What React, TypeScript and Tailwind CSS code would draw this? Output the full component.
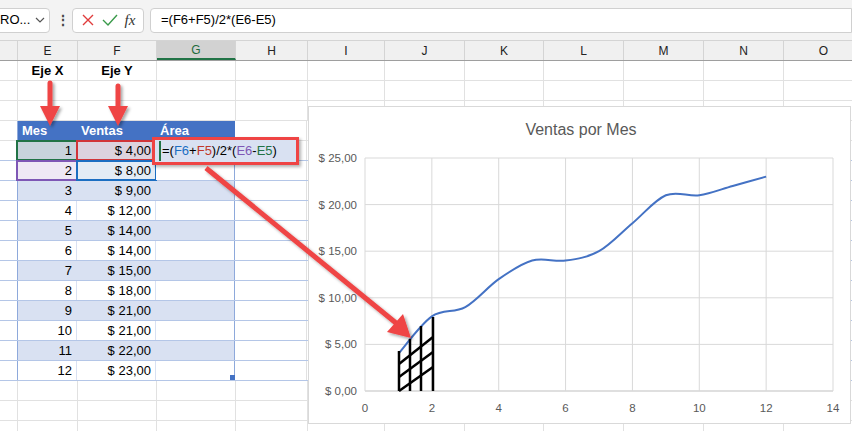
import React from "react";

const cols = [
  { n: "", w: 18 }, { n: "E", w: 60 }, { n: "F", w: 79 }, { n: "G", w: 79 }, { n: "H", w: 72 },
  { n: "I", w: 77 }, { n: "J", w: 80 }, { n: "K", w: 79 }, { n: "L", w: 80 }, { n: "M", w: 80 },
  { n: "N", w: 80 }, { n: "O", w: 80 },
];
const data = [4, 8, 9, 12, 14, 14, 15, 18, 21, 21, 22, 23];
const font = { fontFamily: '"Liberation Sans", Arial, sans-serif' };

function smooth(pts: [number, number][]) {
  let d = `M${pts[0][0]},${pts[0][1]}`;
  for (let i = 0; i < pts.length - 1; i++) {
    const p0 = pts[i - 1] || pts[i], p1 = pts[i], p2 = pts[i + 1], p3 = pts[i + 2] || p2;
    const c1 = [p1[0] + (p2[0] - p0[0]) / 6, p1[1] + (p2[1] - p0[1]) / 6];
    const c2 = [p2[0] - (p3[0] - p1[0]) / 6, p2[1] - (p3[1] - p1[1]) / 6];
    d += ` C${c1[0]},${c1[1]} ${c2[0]},${c2[1]} ${p2[0]},${p2[1]}`;
  }
  return d;
}

function Chart() {
  const L = 56, R = 524, T = 51, B = 284;
  const sx = (x: number) => L + (x / 14) * (R - L);
  const sy = (y: number) => B - (y / 25) * (B - T);
  const pts = data.map((v, i) => [sx(i + 1), sy(v)] as [number, number]);
  const ox = 308, oy = 106;
  return (
    <div className="absolute left-[308px] top-[106px] w-[543px] h-[318px] bg-white border border-[#d9d9d9]">
      <svg width="543" height="318" className="absolute left-0 top-0" style={font}>
        <text x="272" y="28" textAnchor="middle" fontSize="16" fill="#595959">Ventas por Mes</text>
        {[0, 5, 10, 15, 20, 25].map((v) => (
          <g key={v}>
            <line x1={L} x2={R} y1={sy(v)} y2={sy(v)} stroke={v === 0 ? "#bfbfbf" : "#d9d9d9"} />
            <text x={L - 8} y={sy(v) + 4} textAnchor="end" fontSize="11.5" fill="#595959">$ {v},00</text>
          </g>
        ))}
        {[0, 2, 4, 6, 8, 10, 12, 14].map((v) => (
          <g key={v}>
            <line x1={sx(v)} x2={sx(v)} y1={T} y2={B} stroke="#d9d9d9" />
            <text x={sx(v)} y={B + 21} textAnchor="middle" fontSize="11.5" fill="#595959">{v}</text>
          </g>
        ))}
        <path d={smooth(pts)} fill="none" stroke="#4472c4" strokeWidth="2" />
        <g stroke="#000" strokeWidth="2.5">
          <line x1={398 - ox} y1={350 - oy} x2={398 - ox} y2={390 - oy} />
          <line x1={409 - ox} y1={338 - oy} x2={409 - ox} y2={390 - oy} />
          <line x1={420 - ox} y1={325 - oy} x2={420 - ox} y2={390 - oy} />
          <line x1={432 - ox} y1={316 - oy} x2={432 - ox} y2={390 - oy} />
          <line x1={398 - ox} y1={363 - oy} x2={432 - ox} y2={336 - oy} />
          <line x1={398 - ox} y1={376 - oy} x2={432 - ox} y2={351 - oy} />
          <line x1={398 - ox} y1={390 - oy} x2={432 - ox} y2={366 - oy} />
        </g>
      </svg>
    </div>
  );
}

function Cell({ w, className = "", children }: { w: number; className?: string; children?: React.ReactNode }) {
  return (
    <div style={{ width: w }} className={`h-full shrink-0 border-r border-[#e1e1e1] flex items-center ${className}`}>
      {children}
    </div>
  );
}

function Row({ idx }: { idx: number }) {
  const content: Record<number, React.ReactNode> = {};
  const cls: Record<number, string> = {};
  if (idx === 0) {
    content[1] = <span className="w-full text-center font-bold">Eje X</span>;
    content[2] = <span className="w-full text-center font-bold">Eje Y</span>;
  }
  if (idx === 3) {
    ["Mes", "Ventas", "Área"].forEach((t, i) => {
      content[i + 1] = <span className="pl-1 font-bold text-white">{t}</span>;
      cls[i + 1] = "bg-[#4472c4] border-r-0";
    });
  }
  const di = idx - 4;
  if (di >= 0 && di < 12) {
    const band = di % 2 === 0 ? "bg-[#d9e1f2]" : "bg-white";
    cls[1] = `${band} border-r-[#d9e1f2]`;
    cls[2] = `${band} border-r-[#d9e1f2]`;
    cls[3] = `${band} border-r-[#8ea9db]`;
    content[1] = <span className="w-full text-right pr-1">{di + 1}</span>;
    content[2] = <span className="w-full text-right pr-1">$ {data[di]},00</span>;
    if (di === 0) {
      cls[1] = "bg-[#c8d3dc] outline-2 outline-[#217346] -outline-offset-1";
      cls[2] = "bg-[#dcd2de] outline-2 outline-[#d13438] -outline-offset-1";
    }
    if (di === 1) {
      cls[1] = "bg-[#efe9f5] outline-2 outline-[#7e57b5] -outline-offset-1";
      cls[2] = "bg-[#e3ecf5] outline-2 outline-[#1b6ec2] -outline-offset-1";
    }
  }
  const tableRow = idx >= 3 && idx <= 15;
  return (
    <div className={`h-[20px] flex border-b ${idx >= 4 && idx <= 15 ? "border-[#b4c6e7]" : "border-[#e1e1e1]"}`}>
      {cols.map((c, i) => (
        <Cell
          key={i}
          w={c.w}
          className={`${cls[i] ?? ""} ${tableRow && i === 1 ? "border-l border-l-[#8ea9db] -ml-px" : ""}`}
        >
          {content[i]}
        </Cell>
      ))}
    </div>
  );
}

export default function App() {
  return (
    <div className="relative w-[852px] h-[431px] overflow-hidden bg-white text-[13px] text-black" style={font}>
      <div className="h-[41px] bg-[#f3f3f3] flex items-center gap-[6px] border-b border-[#d4d4d4]">
        <div className="w-[51px] h-[25px] bg-white border border-[#d0d0d0] rounded-r flex items-center justify-between pr-1 -ml-px">
          <span className="text-[13px]">RO...</span>
          <svg width="10" height="10" viewBox="0 0 10 10"><path d="M1 3l4 4 4-4" fill="none" stroke="#555" strokeWidth="1.2" /></svg>
        </div>
        <span className="text-[#444] font-bold text-[14px] w-[10px] text-center">⋮</span>
        <div className="w-[72px] h-[25px] bg-white border border-[#d0d0d0] rounded flex items-center justify-around px-1">
          <svg width="14" height="14" viewBox="0 0 14 14"><path d="M2 2l10 10M12 2L2 12" stroke="#e03c3c" strokeWidth="1.4" /></svg>
          <svg width="16" height="14" viewBox="0 0 16 14"><path d="M1 7l5 5 9-10" fill="none" stroke="#3a9a4a" strokeWidth="1.4" /></svg>
          <span className="italic text-[15px] text-[#333]" style={{ fontFamily: '"Liberation Serif", serif' }}>fx</span>
        </div>
        <div className="flex-1 h-[25px] bg-white border border-[#d0d0d0] rounded-l flex items-center pl-[10px] text-[13px]">
          =(F6+F5)/2*(E6-E5)
        </div>
      </div>
      <div className="h-[20px] flex bg-[#f0f0f0] border-b border-[#9e9e9e]">
        {cols.map((c, i) => (
          <div
            key={i}
            style={{ width: c.w }}
            className={`shrink-0 flex items-center justify-center border-r border-[#d4d4d4] text-[12px] ${c.n === "G" ? "bg-[#d2d2d2] text-[#1e6b3d] border-b-2 border-b-[#217346]" : "text-[#222]"}`}
          >
            {c.n}
          </div>
        ))}
      </div>
      {Array.from({ length: 19 }).map((_, i) => (
        <Row key={i} idx={i} />
      ))}
      <div className="absolute left-[152px] top-[137px] w-[147px] h-[28px] border-[3px] border-[#ef4444] bg-[#d9e1f2] flex items-center pl-[4px] text-[13px] shadow-[2px_2px_3px_rgba(0,0,0,0.3)]">
        <span className="border-l-2 border-[#217346] pl-[1px]">=(<span className="text-[#1b6ec2]">F6</span>+<span className="text-[#c0392b]">F5</span>)/2*(<span className="text-[#7e57b5]">E6</span>-<span className="text-[#217346]">E5</span>)</span>
      </div>
      <Chart />
      <svg width="852" height="431" className="absolute left-0 top-0 pointer-events-none">
        <defs>
          <filter id="sh" x="-20%" y="-20%" width="140%" height="140%">
            <feDropShadow dx="2" dy="2" stdDeviation="1.5" floodOpacity="0.35" />
          </filter>
        </defs>
        <g fill="#ef4444" stroke="#ef4444" filter="url(#sh)">
          <line x1="50" y1="83" x2="50" y2="108" strokeWidth="5" strokeLinecap="round" />
          <polygon points="40,106 60,106 50,126" stroke="none" />
          <line x1="118" y1="86" x2="118" y2="108" strokeWidth="5" strokeLinecap="round" />
          <polygon points="108,106 128,106 118,126" stroke="none" />
          <line x1="206" y1="168" x2="396" y2="323" strokeWidth="5" />
          <polygon points="387,332 403,314 411,338" stroke="none" />
        </g>
      </svg>
      <div className="absolute left-[230px] top-[375px] w-[5px] h-[5px] bg-[#4472c4]" />
    </div>
  );
}
